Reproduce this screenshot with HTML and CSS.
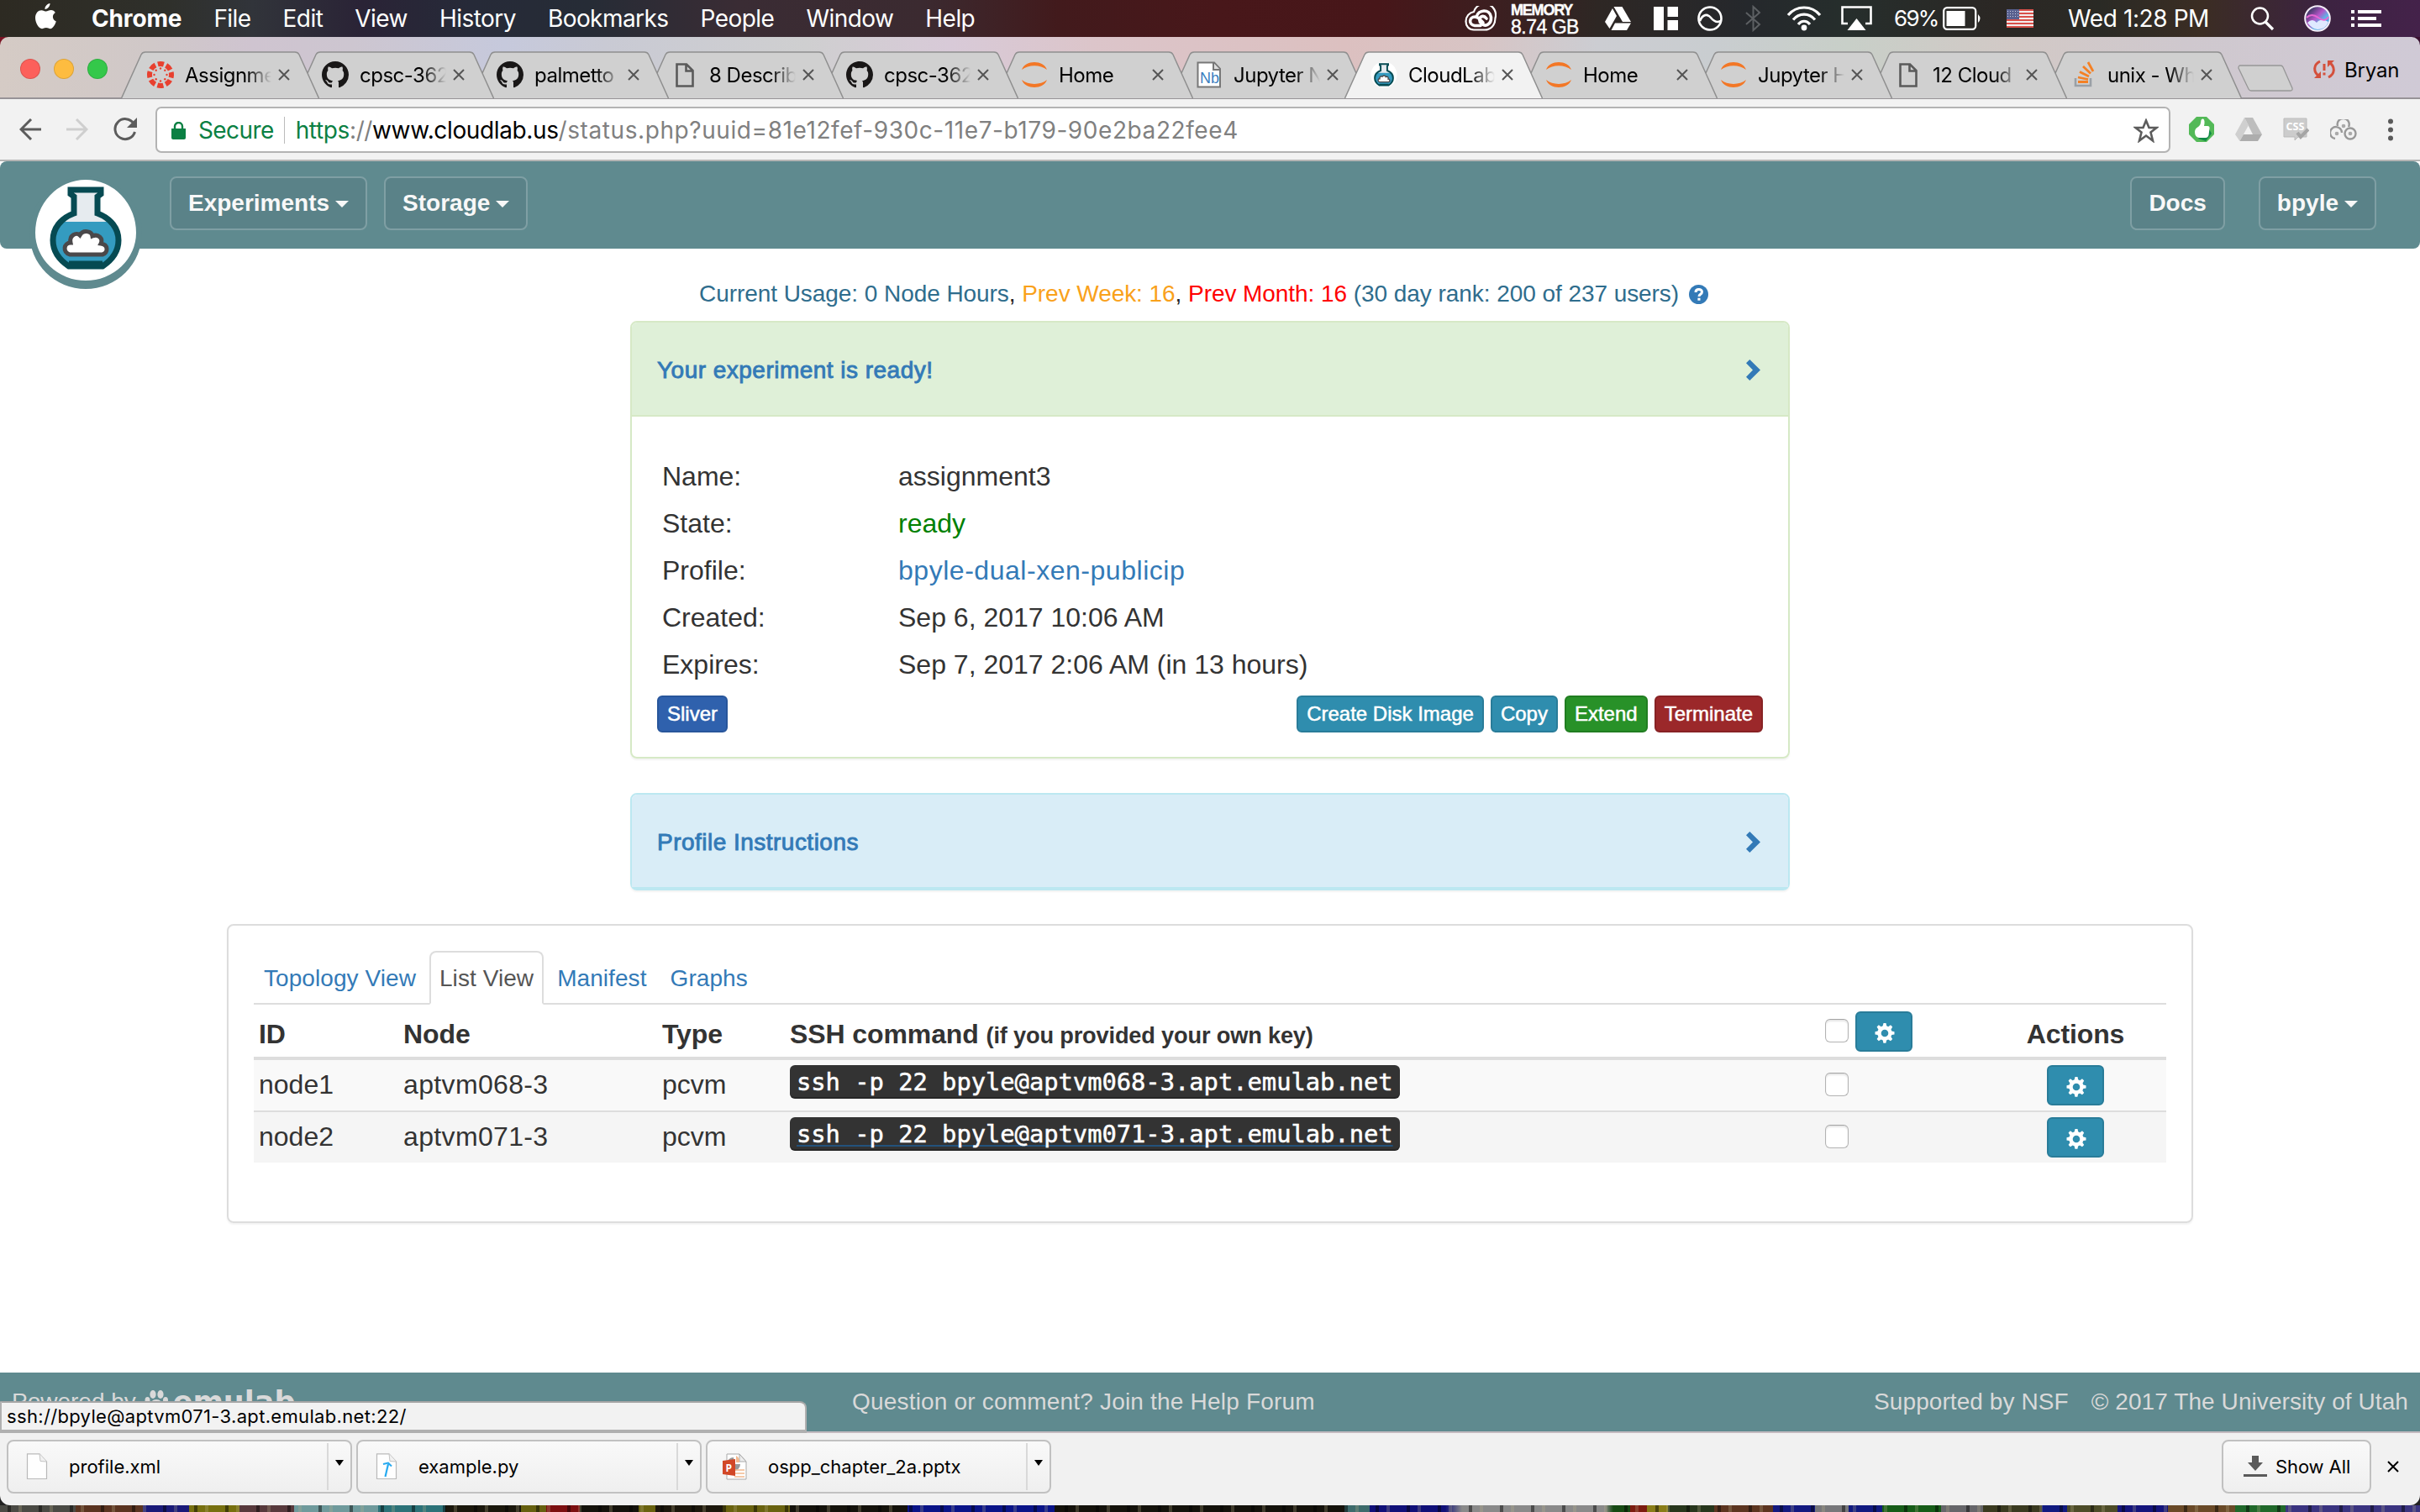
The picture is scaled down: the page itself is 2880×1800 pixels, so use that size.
FILE: index.html
```html
<!DOCTYPE html>
<html lang="en">
<head>
<meta charset="utf-8">
<title>CloudLab - Experiment Status</title>
<link rel="stylesheet" href="styles.css">
</head>
<body>
<svg class="defs" aria-hidden="true">
  <symbol id="tab" viewBox="0 0 236 58"><path d="M.5 56 24 4Q25.500 1 29 1H207Q210.500 1 212 4L235.500 56"/></symbol>
  <symbol id="x" viewBox="0 0 14 14"><path d="M1 1 13 13M13 1 1 13" fill="none" stroke="currentColor" stroke-width="2"/></symbol>
  <symbol id="github" viewBox="0 0 16 16"><path fill="#191717" d="M8 0C3.580 0 0 3.580 0 8c0 3.540 2.290 6.530 5.470 7.590.4.070.55-.17.55-.38 0-.19-.01-.82-.01-1.490-2.010.37-2.530-.49-2.690-.94-.09-.23-.48-.94-.82-1.130-.28-.15-.68-.52-.01-.53.63-.01 1.080.58 1.230.82.72 1.210 1.870.87 2.330.66.07-.52.28-.87.51-1.070-1.780-.2-3.640-.89-3.640-3.950 0-.87.31-1.590.82-2.150-.08-.2-.36-1.020.08-2.120 0 0 .67-.21 2.200.82.64-.18 1.320-.27 2-.27s1.360.09 2 .27c1.530-1.040 2.200-.82 2.200-.82.44 1.100.16 1.920.08 2.120.51.56.82 1.270.82 2.150 0 3.070-1.870 3.750-3.650 3.950.29.25.54.73.54 1.480 0 1.070-.01 1.930-.01 2.200 0 .21.15.46.55.38A8.010 8.010 0 0 0 16 8c0-4.420-3.580-8-8-8z"/></symbol>
  <symbol id="page" viewBox="0 0 32 32"><path d="M6.500 3.500H18L25.500 11V29.500H6.500ZM17.500 3.500V11.500H25" fill="none" stroke="#5a5a5a" stroke-width="2.600"/></symbol>
  <symbol id="jupyter" viewBox="0 0 32 32"><path fill="#f37726" d="M1 10C5-2 27-2 31 10 23 3.500 9 3.500 1 10ZM1 22C5 34 27 34 31 22 23 28.500 9 28.500 1 22Z"/></symbol>
  <symbol id="canvas" viewBox="0 0 32 32"><circle cx="16" cy="16" r="13" fill="none" stroke="#e8402f" stroke-width="6" stroke-dasharray="7.200 3.010" stroke-dashoffset="3.600"/><g fill="#e8402f"><circle cx="16" cy="8.500" r="1.200"/><circle cx="16" cy="23.500" r="1.200"/><circle cx="8.500" cy="16" r="1.200"/><circle cx="23.500" cy="16" r="1.200"/><circle cx="10.700" cy="10.700" r="1.200"/><circle cx="21.300" cy="10.700" r="1.200"/><circle cx="10.700" cy="21.300" r="1.200"/><circle cx="21.300" cy="21.300" r="1.200"/></g></symbol>
  <symbol id="flask" viewBox="0 0 86 100"><path d="M25 4H61V11L58 14V32C73 38 82 50 82 64 82 78 74 89 63 96H23C12 89 4 78 4 64 4 50 13 38 28 32V14L25 11Z" fill="#e6ebef"/><path d="M15 42H71C78 48 82 55 82 64 82 78 74 89 63 92H23C12 89 4 78 4 64 4 55 8 48 15 42Z" fill="#349bc0"/><path d="M25 4H61V9L57 12V32C73 38 82 50 82 64 82 76 75 87 63 95H23C11 87 4 76 4 64 4 50 13 38 29 32V12L25 9Z" fill="none" stroke="#064a52" stroke-width="7"/><path d="M23 92H63" stroke="#064a52" stroke-width="7"/><path d="M24 81C15 78 17 67 25 67 23 58 32 54 36 58 40 51 50 53 51 59 58 56 64 62 61 68 70 69 70 79 63 81Z" fill="#fff" stroke="#4a484a" stroke-width="5"/></symbol>
  <symbol id="gear" viewBox="0 0 24 24"><path fill="#fff" fill-rule="evenodd" d="M10.500 0h3l.7 3.300 2 .9L19 2.300l2.200 2.200-1.700 3 .8 2 3.200.8v3.100l-3.200.7-.9 2.100 1.800 2.900-2.200 2.200-2.900-1.800-2 .9-.7 3.300h-3l-.7-3.300-2-.9L4.800 21.300l-2.200-2.200 1.800-2.900-.9-2.100-3-.7v-3.100l3.100-.8.8-2-1.800-3L4.800 2.300l2.900 1.900 2-.9ZM12 7.700a4.300 4.300 0 1 0 0 8.600 4.300 4.300 0 1 0 0-8.600Z"/></symbol>
  <symbol id="chevron" viewBox="0 0 17 25"><path fill="#337ab7" d="M4.300 0 17 12.500 4.300 25 0 20.700 8 12.500 0 4.300Z"/></symbol>
  <symbol id="file" viewBox="0 0 26 32"><path d="M1.500.8H16L24.500 10V30.500H1.500Z" fill="#fefefe" stroke="#b9b9b9" stroke-width="1.200"/><path d="M16 .8 17 9.500 24.500 10" fill="#f1f1f1" stroke="#c4c4c4"/></symbol>
</svg>

<header class="menubar">
  <svg class="apple" viewBox="0 0 25 31"><path fill="#fff" d="M17.500 0c.2 3-2.500 6.800-6 7C11.100 3.700 14.300.5 17.500 0ZM23.800 11c-4.300 2.800-3.600 8.600 1 10.500-1 3.200-3.800 8.700-6.800 8.700-2 0-2.800-1.200-5.100-1.200s-3.200 1.200-5 1.200C4.300 30.200 0 23.300 0 17.300 0 11.400 3.700 8.200 7.300 8.200c2.400 0 4 1.400 5.600 1.400 1.400 0 3.300-1.500 6-1.500 1.900 0 3.900 1 4.900 2.900Z"/></svg>
  <nav class="menus"><b>Chrome</b><span>File</span><span>Edit</span><span>View</span><span>History</span><span>Bookmarks</span><span>People</span><span>Window</span><span>Help</span></nav>
  <div class="status">
    <svg width="38" height="30" viewBox="0 0 38 30"><path d="M11 7A12.500 12.500 0 0 1 36.500 14.500C36.500 23 31 28.500 24 28.500H11C5 28.500 1.500 24 1.500 18.500 1.500 12.500 5.500 8 11 7Z" fill="none" stroke="#fff" stroke-width="2.200"/><g fill="none" stroke="#fff" stroke-width="3.600" stroke-linecap="round"><path d="M19 23.500H12C4.500 22.500 5 13 12.500 13 16 13 18 16 22 20"/><path d="M14 13.500C16 4 30 3 31.500 13.500 32 22 24 26.500 18.500 19.500 16 13 22 10 26 15"/></g></svg>
    <div class="memory"><b>MEMORY</b><span>8.74 GB</span></div>
    <svg width="31" height="28" viewBox="0 0 31 28"><path fill="#fff" d="M10.500 0H20.500L31 18H21ZM9 2 14 11 5.500 26 0 18ZM12 19.500H31L26 28H7.500Z"/></svg>
    <svg width="29" height="28" viewBox="0 0 29 28"><path fill="#fff" d="M0 0H12V28H0ZM16.500 0H29V12H16.500ZM16.500 16H29V28H16.500Z"/></svg>
    <svg width="30" height="30" viewBox="0 0 30 30"><circle cx="15" cy="15" r="13.500" fill="none" stroke="#fff" stroke-width="2.600"/><path d="M3 18C6 10 12 9 16 14S24 20 28 18" fill="none" stroke="#fff" stroke-width="2.600"/></svg>
    <svg width="19" height="32" viewBox="0 0 19 32"><path d="M1 9 17 23 9.500 30V2L17 9 1 23" fill="none" stroke="#5d6063" stroke-width="2"/></svg>
    <svg width="42" height="30" viewBox="0 0 42 30"><g fill="none" stroke="#fff" stroke-width="3.200"><path d="M2 11C12-1 30-1 40 11"/><path d="M8 16.500C15 8 27 8 34 16.500"/><path d="M14 22C18 17 24 17 28 22"/></g><circle cx="21" cy="26" r="3.400" fill="#fff"/></svg>
    <svg width="37" height="30" viewBox="0 0 37 30"><path d="M8 21H1.500V1.500H35.500V21H29" fill="none" stroke="#fff" stroke-width="2.600"/><path fill="#fff" d="M18.500 15 29.500 29H7.500Z"/></svg>
    <span class="pct">69%</span>
    <svg width="46" height="28" viewBox="0 0 46 28"><rect x="1.200" y="1.200" width="38" height="25.600" rx="4" fill="none" stroke="#fff" stroke-width="2.300"/><path fill="#fff" d="M4.500 5H26.500V23H4.500ZM42 9Q47 14 42 19Z"/></svg>
    <svg width="32" height="22" viewBox="0 0 32 22"><path fill="#f3eeee" d="M0 0H32V22H0Z"/><path stroke="#d8504a" stroke-width="2.200" d="M0 1H32M0 5H32M0 9H32M0 13H32M0 17H32M0 21H32"/><path fill="#58608f" d="M0 0H15V12H0Z"/><path stroke="#c8cbe0" stroke-width="1" stroke-dasharray="1 2" d="M1 2.500H14M1 5.500H14M1 8.500H14"/></svg>
    <span class="clock">Wed 1:28 PM</span>
    <svg width="29" height="29" viewBox="0 0 29 29"><circle cx="11.500" cy="11" r="9.500" fill="none" stroke="#fff" stroke-width="2.500"/><path d="M18 18 27 27" stroke="#fff" stroke-width="3.200"/></svg>
    <svg width="32" height="32" viewBox="0 0 32 32"><defs><linearGradient id="siri" x1="0" y1="0" x2="1" y2="1"><stop offset=".2" stop-color="#4a3c70"/><stop offset=".45" stop-color="#b455c8"/><stop offset=".65" stop-color="#59b9e8"/><stop offset="1" stop-color="#3f6fd0"/></linearGradient></defs><circle cx="16" cy="16" r="14.800" fill="url(#siri)" stroke="#f4eef8" stroke-width="2"/><path d="M4 21Q10 15 15 21 20 15 29 20 26 29 16 29 9 28 4 21Z" fill="#dfe9ff"/><path d="M3 15Q9 9 17 15T29 14" fill="none" stroke="#e867d4" stroke-width="2"/></svg>
    <svg width="36" height="20" viewBox="0 0 36 20"><path fill="#fff" d="M0 0H4V4H0ZM8 0H36V4H8ZM0 8H4V12H0ZM8 8H30V12H8ZM0 16H4V20H0ZM8 16H36V20H8Z"/></svg>
  </div>
</header>

<div class="window">
<div class="tabstrip">
  <div class="lights"><i class="red"></i><i class="yellow"></i><i class="green"></i></div>
  <div class="tabs">
    <div class="tab"><svg class="shape"><use href="#tab"/></svg><svg class="fav"><use href="#canvas"/></svg><span class="title">Assignme</span><svg class="close"><use href="#x"/></svg></div>
    <div class="tab"><svg class="shape"><use href="#tab"/></svg><svg class="fav"><use href="#github"/></svg><span class="title">cpsc-362</span><svg class="close"><use href="#x"/></svg></div>
    <div class="tab"><svg class="shape"><use href="#tab"/></svg><svg class="fav"><use href="#github"/></svg><span class="title">palmetto</span><svg class="close"><use href="#x"/></svg></div>
    <div class="tab"><svg class="shape"><use href="#tab"/></svg><svg class="fav"><use href="#page"/></svg><span class="title">8 Describ</span><svg class="close"><use href="#x"/></svg></div>
    <div class="tab"><svg class="shape"><use href="#tab"/></svg><svg class="fav"><use href="#github"/></svg><span class="title">cpsc-362</span><svg class="close"><use href="#x"/></svg></div>
    <div class="tab"><svg class="shape"><use href="#tab"/></svg><svg class="fav"><use href="#jupyter"/></svg><span class="title">Home</span><svg class="close"><use href="#x"/></svg></div>
    <div class="tab"><svg class="shape"><use href="#tab"/></svg><svg class="fav" viewBox="0 0 32 32"><path d="M2.500 1.500H22L29 9V30.500H2.500Z" fill="#fff" stroke="#777" stroke-width="2"/><path d="M21 2V10H29" fill="#ddd" stroke="#777" stroke-width="2"/><text x="5" y="26" font-family="Liberation Sans" font-size="19" textLength="23" lengthAdjust="spacingAndGlyphs" fill="#3b7fc0">Nb</text></svg><span class="title">Jupyter N</span><svg class="close"><use href="#x"/></svg></div>
    <div class="tab active"><svg class="shape"><use href="#tab"/></svg><svg class="fav" viewBox="0 0 32 32"><circle cx="16" cy="16" r="15.500" fill="#fff"/><svg x="4" y="2" width="24" height="28"><use href="#flask"/></svg></svg><span class="title">CloudLab</span><svg class="close"><use href="#x"/></svg></div>
    <div class="tab"><svg class="shape"><use href="#tab"/></svg><svg class="fav"><use href="#jupyter"/></svg><span class="title">Home</span><svg class="close"><use href="#x"/></svg></div>
    <div class="tab"><svg class="shape"><use href="#tab"/></svg><svg class="fav"><use href="#jupyter"/></svg><span class="title">Jupyter H</span><svg class="close"><use href="#x"/></svg></div>
    <div class="tab"><svg class="shape"><use href="#tab"/></svg><svg class="fav"><use href="#page"/></svg><span class="title">12 Cloud</span><svg class="close"><use href="#x"/></svg></div>
    <div class="tab"><svg class="shape"><use href="#tab"/></svg><svg class="fav" viewBox="0 0 32 32"><path d="M7 20V29H25V20" fill="none" stroke="#9aa0a6" stroke-width="2.600"/><path d="M10 24.500H22M10 19 22 21.500M12 12.500 23 18M16 6 25 14.500M22 1 28 12" stroke="#f48024" stroke-width="2.800"/></svg><span class="title">unix - Wh</span><svg class="close"><use href="#x"/></svg></div>
  </div>
  <svg class="newtab" viewBox="0 0 66 32"><path d="M3 1H51Q53 1 54 3L65 28Q65.500 31 63 31H16Q14 31 13 29L1 4Q1 1 3 1Z" fill="#d0d0d0" stroke="#979797" stroke-width="1.300"/></svg>
  <div class="profile"><svg width="26" height="24" viewBox="0 0 26 24"><g fill="none" stroke="#d4503c" stroke-width="3"><path d="M8 2C0 6 0 14 6 19"/><path d="M18 21C26 17 26 9 20 4"/></g><path fill="#d4503c" d="M1 22H9V14ZM25 1H17V9ZM11.500 5H14.500V13H11.500ZM11.500 15.500H14.500V18.500H11.500Z"/></svg><span>Bryan</span></div>
</div>

<div class="toolbar">
  <svg width="26" height="26" viewBox="0 0 26 26"><path d="M14 1 2 13 14 25M2 13H26" fill="none" stroke="#5c5c5c" stroke-width="3"/></svg>
  <svg width="26" height="26" viewBox="0 0 26 26"><path d="M12 1 24 13 12 25M24 13H0" fill="none" stroke="#cfcfcf" stroke-width="3"/></svg>
  <svg width="28" height="28" viewBox="0 0 28 28"><path d="M24 7A12 12 0 1 0 25.500 17" fill="none" stroke="#5c5c5c" stroke-width="3"/><path fill="#5c5c5c" d="M28 0V12H16Z"/></svg>
  <div class="omnibox">
    <svg width="17" height="21" viewBox="0 0 17 21"><path fill="#0b8043" d="M0 8H17V19Q17 21 15 21H2Q0 21 0 19Z"/><path d="M4 9V5.500A4.500 4.500 0 0 1 13 5.500V9" fill="none" stroke="#0b8043" stroke-width="2.400"/></svg>
    <span class="secure">Secure</span>
    <span class="url"><em>https</em>://<strong>www.cloudlab.us</strong><span class="path">/status.php?uuid=81e12fef-930c-11e7-b179-90e2ba22fee4</span></span>
    <svg class="star" width="30" height="29" viewBox="0 0 30 29"><path d="M15 2.500 18.500 11H27.500L20.500 16.500 23 26.500 15 20.500 7 26.500 9.500 16.500 2.500 11H11.500Z" fill="none" stroke="#5c5c5c" stroke-width="2.600"/></svg>
  </div>
  <svg width="30" height="30" viewBox="0 0 30 30"><path fill="#53b957" d="M9 0H21L30 9V21L21 30H9L0 21V9Z"/><path fill="#128a48" d="M23 13 27 20 20 29 11 26Z"/><path fill="#fff" d="M11 12C14 10 14 7 14.500 4Q15 2 17 2.500 19.500 4 18 11H22Q25 11 24.500 14L23.500 22Q22.500 25 20 25H12Q7 24 7 18 7 14 11 12Z"/></svg>
  <svg width="32" height="28" viewBox="0 0 32 28"><path fill="#bdbdbd" d="M11 0H21L32 20H21Z"/><path fill="#cfcfcf" d="M11 0 16 9 5.500 28 0 20Z"/><path fill="#adadad" d="M10 20H32L27 28H5.500Z"/></svg>
  <svg width="31" height="28" viewBox="0 0 31 28"><path fill="#ccc" stroke="#bbb" d="M1 1H28V23H18L14 27V23H1Z"/><text x="3.500" y="15" font-family="Open Sans" font-weight="700" font-size="12" textLength="22" lengthAdjust="spacingAndGlyphs" fill="#fff">CSS</text><path d="M17 18 21 23 30 14" fill="none" stroke="#a5a5a5" stroke-width="4"/></svg>
  <svg width="32" height="25" viewBox="0 0 32 25"><g fill="none" stroke="#999" stroke-width="2.400"><path d="M6 23A7 7 0 1 1 14 16"/><path d="M9 8A7 7 0 1 1 22 9"/><circle cx="24" cy="17" r="6.500"/></g><g fill="#aaa"><circle cx="8" cy="17" r="2.300"/><circle cx="16" cy="8" r="2.300"/><circle cx="24" cy="17" r="2.300"/></g></svg>
  <svg width="6" height="27" viewBox="0 0 6 27"><g fill="#5a5a5a"><circle cx="3" cy="3.500" r="3"/><circle cx="3" cy="13.500" r="3"/><circle cx="3" cy="23.500" r="3"/></g></svg>
</div>

<main class="page">
  <nav class="navbar">
    <div class="logo"><svg width="86" height="104"><use href="#flask"/></svg></div>
    <a class="navbtn">Experiments<i class="caret"></i></a>
    <a class="navbtn">Storage<i class="caret"></i></a>
    <a class="navbtn docs">Docs</a>
    <a class="navbtn">bpyle<i class="caret"></i></a>
  </nav>

  <div class="usage"><p><span>Current Usage: 0 Node Hours</span>, <span class="week">Prev Week: 16</span>, <span class="month">Prev Month: 16</span> <span>(30 day rank: 200 of 237 users)</span></p><svg class="help" viewBox="0 0 23 23"><circle cx="11.500" cy="11.500" r="11.500" fill="#337ab7"/><path d="M8 9C8 4.500 15.500 4.500 15.500 8.500 15.500 11.500 12 11 12 14" fill="none" stroke="#fff" stroke-width="3"/><path fill="#fff" d="M10.400 15.700H13.500V18.700H10.400Z"/></svg></div>

  <section class="panel ready">
    <div class="head"><a>Your experiment is ready!</a><svg class="chev"><use href="#chevron"/></svg></div>
    <dl>
      <dt>Name:</dt><dd>assignment3</dd>
      <dt>State:</dt><dd class="ok">ready</dd>
      <dt>Profile:</dt><dd class="link">bpyle-dual-xen-publicip</dd>
      <dt>Created:</dt><dd>Sep 6, 2017 10:06 AM</dd>
      <dt>Expires:</dt><dd>Sep 7, 2017 2:06 AM (in 13 hours)</dd>
    </dl>
    <div class="actions"><button class="btn primary">Sliver</button><button class="btn info">Create Disk Image</button><button class="btn info">Copy</button><button class="btn success">Extend</button><button class="btn danger">Terminate</button></div>
  </section>

  <section class="panel instructions">
    <div class="head"><a>Profile Instructions</a><svg class="chev"><use href="#chevron"/></svg></div>
  </section>

  <section class="panel nodes">
    <div class="viewtabs"><a>Topology View</a><a class="on">List View</a><a>Manifest</a><a>Graphs</a></div>
    <div class="row header"><b>ID</b><b>Node</b><b>Type</b><b>SSH command <small>(if you provided your own key)</small></b><div class="checks"><i class="check"></i><button class="gear"><svg><use href="#gear"/></svg></button></div><b class="mid">Actions</b></div>
    <div class="row one"><span>node1</span><span class="host">aptvm068-3</span><span>pcvm</span><code>ssh -p 22 bpyle@aptvm068-3.apt.emulab.net</code><i class="check"></i><button class="gear"><svg><use href="#gear"/></svg></button></div>
    <div class="row two"><span>node2</span><span class="host">aptvm071-3</span><span>pcvm</span><code><u>ssh -p 22 bpyle@aptvm071-3.apt.emulab.net</u></code><i class="check"></i><button class="gear"><svg><use href="#gear"/></svg></button></div>
  </section>

  <footer class="footer">
    <span class="powered">Powered by <svg width="28" height="28" viewBox="0 0 28 28"><g fill="#d9d9d9"><ellipse cx="10" cy="5" rx="3.600" ry="5"/><ellipse cx="19" cy="5" rx="3.600" ry="5"/><ellipse cx="3.500" cy="12" rx="3" ry="4"/><ellipse cx="25" cy="12" rx="3" ry="4"/><ellipse cx="14" cy="19" rx="8" ry="8"/></g></svg><b>emulab</b></span>
    <span class="question">Question or comment? Join the Help Forum</span>
    <span class="rights"><span>Supported by NSF</span><span>© 2017 The University of Utah</span></span>
    <div class="bubble">ssh://bpyle@aptvm071-3.apt.emulab.net:22/</div>
  </footer>
</main>

<div class="shelf">
  <div class="download"><svg class="doc"><use href="#file"/></svg><span>profile.xml</span><i class="drop"></i></div>
  <div class="download"><svg class="doc" viewBox="0 0 26 32"><use href="#file"/><path d="M11.500 28 15 13" fill="none" stroke="#27aaf0" stroke-width="2.200"/><path d="M9 13 15 11.500 19 15.500" fill="none" stroke="#27aaf0" stroke-width="2"/></svg><span>example.py</span><i class="drop"></i></div>
  <div class="download"><svg class="doc ppt" viewBox="0 0 30 32"><path d="M5 1H20L28 10V31H5Z" fill="#fff" stroke="#a9a9a9"/><path d="M20 1V10H28Z" fill="#eee" stroke="#aaa"/><path d="M13 5A8 8 0 1 0 21 13H14Z" fill="#999"/><path d="M16 3A8 8 0 0 1 20 11H16Z" fill="#f2b98f"/><path d="M14 20H26M14 24H26M14 28H26" stroke="#f2b98f" stroke-width="1.500"/><path d="M0 9 15 7V27L0 25Z" fill="#d24726"/><text x="3.500" y="21.500" font-family="Open Sans" font-weight="700" font-size="12" fill="#fff">P</text></svg><span>ospp_chapter_2a.pptx</span><i class="drop"></i></div>
  <div class="showall"><svg width="28" height="26" viewBox="0 0 28 26"><path fill="#5a5a5a" d="M10 0H18V8H23L14 18 5 8H10ZM0 22H28V25H0Z"/></svg><span>Show All</span></div>
  <svg class="shelfclose"><use href="#x"/></svg>
</div>
</div>
</body>
</html>
```
FILE: styles.css
```css
* { box-sizing: border-box; }
body { margin: 0; width: 2880px; height: 1800px; overflow: hidden; display: flex; flex-direction: column; font-family: "Liberation Sans", Arial, sans-serif; font-size: 28px; color: #333;
  background:
    repeating-linear-gradient(90deg, transparent 0 9px, rgba(0,0,0,.45) 9px 13px, transparent 13px 22px, rgba(190,180,140,.25) 22px 26px, transparent 26px 37px) 0 1792px / 2880px 8px no-repeat,
    linear-gradient(90deg, #4a4a44 0 90px, #5a3420 90px 170px, #1a1a78 170px 225px, #77700f 225px 285px, #57393c 285px 350px, #6f9a9c 350px 450px, #2c7278 450px 530px, #1a170c 530px 620px, #66600f 620px 650px, #7c0f10 650px 690px, #14120b 690px 760px, #69620f 760px 780px, #1c170c 780px 860px, #69620f 860px 940px, #14120b 940px 1080px, #0a1488 1080px 1255px, #14120b 1255px 1600px, #3d6b6c 1600px 1630px, #101078 1630px 1720px, #8a8a8a 1740px 1910px, #174a14 1920px 1940px, #7c1c10 1940px 1960px, #8a7d18 1960px 1985px, #27361c 1985px 2040px, #5c3520 2040px 2110px, #141a80 2110px 2160px, #77777a 2160px 2200px, #111a80 2200px 2240px, #165c18 2240px 2310px, #66666a 2310px 2360px, #3a3a20 2360px 2430px, #111a80 2430px 2460px, #4d4c28 2460px 2520px, #15157c 2520px 2580px, #6a4a28 2580px 2660px, #20682a 2660px 2720px, #3a3480 2720px 2880px) 0 1792px / 2880px 8px no-repeat,
    linear-gradient(90deg, #7a1424, #3a1030) 0 44px / 2880px 20px no-repeat, #222; }
svg { display: block; flex: none; }
i { font-style: normal; }
.defs { position: absolute; width: 0; height: 0; }

.menubar { height: 44px; flex: none; display: flex; align-items: center; padding-left: 42px; color: #fff; font-family: Inter, sans-serif; line-height: 44px;
  background: linear-gradient(90deg, #2d2a22 0, #2f302b 200px, #31343a 300px, #2a2336 430px, #262a38 560px, #262c36 700px, #3a2c34 880px, #3b2a30 1100px, #421a1c 1260px, #48171a 1450px, #471619 1640px, #3a2021 1800px, #2e2724 1900px, #25282c 2080px, #262e2c 2200px, #2b2724 2380px, #2a2a25 2500px, #3b2d23 2620px, #3c2340 2760px, #44224a 2880px); }
.apple { width: 25px; height: 31px; margin-top: -6px; }
.menus { display: flex; gap: 38px; margin-left: 42px; letter-spacing: -.55px; }
.menus b { letter-spacing: -.15px; }
.status { display: grid; align-items: center; margin-left: auto; width: 1137px; grid-template-columns: 55px 112px 58px 52px 57px 49px 65px 63px 58px 76px 73px 217px 64px 56px 82px; letter-spacing: -.4px; }
.memory { display: flex; flex-direction: column; line-height: 20px; font-size: 23px; font-family: "Liberation Sans", Arial, sans-serif; letter-spacing: -.5px; -webkit-text-stroke: .4px #fff; }
.memory b { font-size: 18px; line-height: 19px; letter-spacing: -1.2px; }
.pct { font-size: 26px; letter-spacing: -1.700px; }

.window { width: 2880px; height: 1748px; border-radius: 10px 10px 12px 12px; overflow: hidden; display: flex; flex-direction: column; flex: none; }
.tabstrip { height: 74px; flex: none; display: flex; border-bottom: 2px solid #979397; font-family: Inter, sans-serif; font-size: 24px; color: #000;
  background: linear-gradient(90deg, #d5cbc5 0, #d0c8c8 180px, #cfc4d0 300px, #cdc6d0 420px, #c6c9dc 600px, #c9cad4 720px, #cfcfd0 960px, #d8cad8 1130px, #dcc5ca 1300px, #dcc0c0 1600px, #d8c4c4 1750px, #cccdd2 1900px, #c9cdd0 2040px, #c8cfc8 2200px, #d2c9c6 2400px, #cfc8ce 2600px, #d0cad6 2880px); }
.lights { width: 144px; padding: 26px 0 0 24px; display: flex; gap: 16px; }
.lights i { width: 24px; height: 24px; border-radius: 50%; border: 1px solid rgba(0,0,0,.13); }
.red { background: #fc605b; } .yellow { background: #fdbc40; } .green { background: #34c84a; }
.tabs { display: flex; padding-top: 17px; isolation: isolate; }
.tab { width: 236px; height: 55px; margin-right: -28px; padding-left: 31px; display: flex; align-items: center; position: relative; }
.tab:nth-child(1) { z-index: 12; } .tab:nth-child(2) { z-index: 11; } .tab:nth-child(3) { z-index: 10; } .tab:nth-child(4) { z-index: 9; } .tab:nth-child(5) { z-index: 8; } .tab:nth-child(6) { z-index: 7; } .tab:nth-child(7) { z-index: 6; } .tab:nth-child(9) { z-index: 5; } .tab:nth-child(10) { z-index: 4; } .tab:nth-child(11) { z-index: 3; } .tab:nth-child(12) { z-index: 2; }
.shape { position: absolute; left: 0; top: 0; width: 236px; height: 58px; fill: #d0d0d0; stroke: #8f8f8f; stroke-width: 1.5; overflow: visible; clip-path: inset(-2px 0 2px 0); }
.tab.active { z-index: 20; }
.active .shape { fill: #f2f2f2; clip-path: none; }
.fav { width: 32px; height: 32px; position: relative; }
.title { position: relative; margin-left: 13px; padding-top: 1px; width: 103px; overflow: hidden; white-space: nowrap; letter-spacing: -.5px; -webkit-mask-image: linear-gradient(90deg, #000 74px, transparent 103px); mask-image: linear-gradient(90deg, #000 74px, transparent 103px); }
.close { position: relative; margin-left: 8px; width: 14px; height: 14px; color: #555; }
.newtab { width: 66px; height: 32px; margin: 33px 0 0 23px; }
.profile { display: flex; gap: 11px; align-items: center; margin: 14px 0 0 24px; height: 50px; letter-spacing: -.2px; }

.toolbar { height: 74px; flex: none; background: #f2f2f2; border-bottom: 2px solid #b5b5b5; display: grid; align-items: center; padding: 0 0 0 23px; grid-template-columns: 56px 56px 50px 2420px 55px 57px 56px 69px 6px; font-family: Inter, sans-serif; }
.omnibox { width: 2398px; height: 55px; border: 2px solid #b3b3b3; border-radius: 7px; background: #fff; display: flex; align-items: center; padding: 2px 12px 0 17px; }
.secure { color: #0b8043; margin-left: 15px; padding-right: 12px; border-right: 1px solid #bbb; line-height: 32px; letter-spacing: -.6px; }
.url { margin-left: 13px; color: #808080; letter-spacing: -.37px; }
.url .path { letter-spacing: .58px; }
.url em { font-style: normal; color: #0b8043; } .url strong { font-weight: 400; color: #000; }
.star { margin-left: auto; }

.page { flex: 1; background: #fff; display: flex; flex-direction: column; }
.navbar { position: relative; height: 104px; flex: none; background: #5f8a8f; border-radius: 8px; padding: 18px 52px 0 202px; display: flex; align-items: flex-start; gap: 20px; }
.navbtn { height: 64px; padding: 0 20px; border: 2px solid #7f9fa4; border-radius: 8px; background: #5a8288; color: #f8f8f8; font-weight: 700; line-height: 60px; display: flex; align-items: center; }
.docs { margin: 0 20px 0 auto; }
.caret { border: 8px solid transparent; border-top-color: #f8f8f8; border-bottom: 0; margin-left: 7px; margin-top: 2px; }
.logo { position: absolute; left: 35px; top: 18px; width: 134px; height: 134px; border-radius: 50%; border: solid #5f8a8f; border-width: 4px 7px 10px; background: #fff; display: flex; justify-content: center; align-items: center; padding-bottom: 4px; }

.usage { margin: 37px 0 0 832px; height: 31px; line-height: 34px; display: flex; flex: none; color: #222; letter-spacing: -.06px; }
.usage p { margin: 0; }
.usage span { color: #2f6d8d; }
.usage .week { color: #f9a11b; } .usage .month { color: #f00; }
.help { width: 23px; height: 23px; margin: 6px 0 0 12px; }

.panel { width: 1380px; margin-left: 750px; flex: none; border: 2px solid #ddd; border-radius: 8px; box-shadow: 0 2px 2px rgba(0,0,0,.05); }
.head { height: 112px; padding: 3px 33px 0 30px; display: flex; align-items: center; justify-content: space-between; color: #337ab7; border-radius: 6px 6px 0 0; -webkit-text-stroke: .9px #337ab7; letter-spacing: .48px; }
.chev { width: 17px; height: 25px; }
.ready { margin-top: 18px; height: 521px; border-color: #d6e9c6; }
.ready .head { background: #dff0d8; border-bottom: 2px solid #d6e9c6; }
dl { margin: 43px 0 0; padding-left: 36px; display: grid; grid-template-columns: 281px auto; grid-auto-rows: 56px; font-size: 32px; line-height: 56px; }
dd { margin: 0; } .ok { color: #008000; } .link { color: #337ab7; letter-spacing: .53px; }
.actions { display: flex; gap: 8px; padding: 9px 30px 0; }
.btn { height: 44px; padding: 0 10px; border: 2px solid; border-radius: 6px; font: 24px/40px "Liberation Sans", Arial, sans-serif; color: #fff; -webkit-text-stroke: .5px #fff; }
.primary { background: #2f61ad; border-color: #28569b; margin-right: auto; }
.info { background: #2f8dae; border-color: #297c99; }
.success { background: #289128; border-color: #217d21; }
.danger { background: #9b282a; border-color: #872224; }
.instructions { margin-top: 41px; height: 116px; border-color: #bce8f1; border-bottom-width: 4px; }
.instructions .head { background: #d9edf7; height: 110px; }

.nodes { margin: 40px 0 0 270px; width: 2340px; height: 356px; padding: 30px 30px 0; }
.viewtabs { height: 64px; border-bottom: 2px solid #ddd; display: flex; gap: 4px; color: #337ab7; }
.viewtabs a { padding: 0 10px; height: 64px; border: 2px solid transparent; line-height: 61px; letter-spacing: .07px; }
.viewtabs .on { color: #555; background: #fff; border-color: #ddd; border-bottom-color: #fff; border-radius: 8px 8px 0 0; }
.row { display: grid; grid-template-columns: 172px 308px 152px 1232px 190px 216px; padding-left: 6px; font-size: 32px; height: 60px; align-items: center; }
.header { height: 66px; border-bottom: 4px solid #ddd; }
.header b { padding-top: 8px; letter-spacing: -.1px; } .header .mid { text-align: center; }
.header small { font-size: 27.2px; letter-spacing: -.17px; }
.row > span { margin-top: -2px; }
.host { letter-spacing: .35px; }
.one { background: #f9f9f9; }
.two { background: #f5f5f5; height: 62px; border-top: 2px solid #ddd; }
.row code { justify-self: start; margin-bottom: 8px; background: #333; color: #fff; font: 28.8px/40px "DejaVu Sans Mono", monospace; letter-spacing: -.03px; -webkit-text-stroke: .5px #fff; padding: 0 8px; border-radius: 6px; box-shadow: inset 0 -2px 0 rgba(0,0,0,.25); height: 40px; }
.row u { text-decoration: underline 2px #23527c; text-underline-offset: 3px; text-decoration-skip-ink: none; }
.check { width: 28px; height: 28px; border: 1.5px solid #b3b3b3; border-top-color: #a3a3a3; border-radius: 6px; background: #fff; box-shadow: inset 0 2px 2px rgba(0,0,0,.1); margin-bottom: 2px; display: block; }
.checks { display: flex; gap: 8px; align-items: center; margin-top: 2px; }
.gear { width: 68px; height: 48px; border: 2px solid #297c99; border-radius: 6px; background: #2f8dae; display: flex; align-items: center; justify-content: center; padding: 4px 0 0 1px; justify-self: center; }
.gear svg { width: 24px; height: 24px; }

.footer { position: relative; height: 72px; flex: none; margin-top: auto; background: #5f8a8f; border-bottom: 2px solid #c3babf; color: #d9d9d9; display: grid; grid-template-columns: 1000px 1fr auto; align-items: center; padding: 0 14px; line-height: 40px; }
.powered { display: flex; align-items: center; white-space: pre; }
.powered b { font: 700 35px/40px "DejaVu Sans", sans-serif; margin-left: 6px; }
.powered svg { margin-left: 2px; }
.question { letter-spacing: .19px; }
.rights { display: flex; gap: 27px; letter-spacing: .08px; }
.bubble { position: absolute; left: 0; bottom: -2px; width: 960px; height: 38px; border: 2px solid #b0b0b0; border-top-color: #a5a5a5; border-bottom-width: 4px; border-radius: 0 8px 0 0; background: #f2f2f2; color: #000; font: 22px/32px Inter, sans-serif; letter-spacing: .33px; padding-left: 6px; }

.shelf { height: 86px; flex: none; background: #f1f1f1; display: flex; align-items: flex-start; gap: 5px; padding: 8px 25px 0 8px; font-family: Inter, sans-serif; font-size: 22px; color: #000; }
.download, .showall { height: 64px; border: 2px solid #c1c1c1; border-radius: 8px; background: linear-gradient(#f9f9f9, #efefef); display: flex; align-items: center; }
.download { width: 411px; padding-left: 21px; }
.doc { width: 26px; height: 32px; margin-right: 25px; }
.ppt { width: 30px; margin: 0 24px 0 -3px; }
.drop { width: 28px; height: 56px; border-left: 2px solid #d9d9d9; margin-left: auto; display: flex; padding: 20px 0 0 8px; }
.drop::after { content: ""; height: 7px; border: 5px solid transparent; border-top: 7px solid #000; border-bottom: 0; }
.showall { width: 178px; margin-left: auto; padding-left: 24px; gap: 10px; letter-spacing: -.1px; }
.shelfclose { width: 14px; height: 14px; margin: 25px 0 0 14px; }
```
